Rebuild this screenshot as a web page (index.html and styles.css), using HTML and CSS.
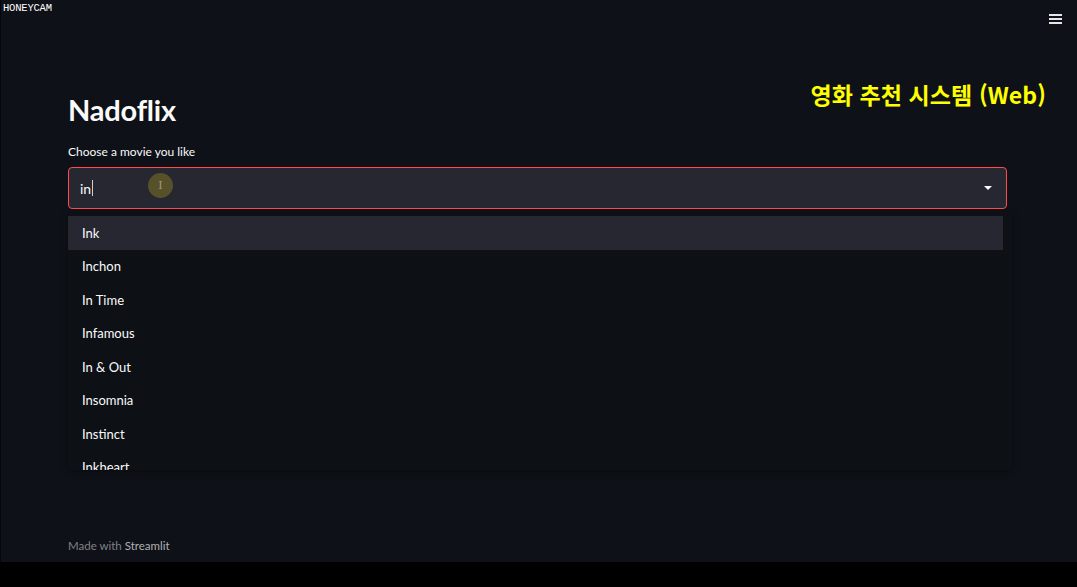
FILE: index.html
```html
<!DOCTYPE html>
<html lang="ko">
<head>
<meta charset="utf-8">
<title>Nadoflix</title>
<link rel="stylesheet" href="styles.css">
</head>
<body>
<div class="app">
  <header class="topbar">
    <span class="watermark">HONEYCAM</span>
    <span class="hamburger" aria-label="menu"><i></i><i></i><i></i></span>
  </header>
  <main class="main">
    <div class="title-row">
      <h1 class="title">Nadoflix</h1>
      <div class="caption">영화 추천 시스템 (Web)</div>
    </div>
    <label class="label">Choose a movie you like</label>
    <div class="select">
      <div class="select-box">
        <span class="typed">in</span><span class="caret"></span>
        <span class="cursor-dot"><span class="ibeam">I</span></span>
        <svg class="arrow" width="10" height="6" viewBox="0 0 10 6"><path d="M1 1h8L5 5z" fill="#fafafa"/></svg>
      </div>
      <ul class="menu">
        <li class="item active">Ink</li>
        <li class="item">Inchon</li>
        <li class="item">In Time</li>
        <li class="item">Infamous</li>
        <li class="item">In &amp; Out</li>
        <li class="item">Insomnia</li>
        <li class="item">Instinct</li>
        <li class="item">Inkheart</li>
      </ul>
    </div>
  </main>
  <footer class="footer">Made with <b>Streamlit</b></footer>
</div>
</body>
</html>
```
FILE: styles.css
```css
* { box-sizing: border-box; }
html, body { margin: 0; padding: 0; }
body {
  background: #000;
  width: 1077px;
  height: 587px;
  overflow: hidden;
  font-family: Lato, "Noto Sans", sans-serif;
  color: #fafafa;
}
.app {
  height: 562px;
  background: #0e1117;
  display: flex;
  flex-direction: column;
  border-left: 1px solid #05070a;
}
.topbar {
  height: 40px;
  display: flex;
  justify-content: space-between;
  align-items: flex-start;
  padding: 3px 15px 0 2px;
}
.watermark {
  font-family: "Liberation Mono", monospace;
  font-size: 10.5px;
  line-height: 11px;
  font-weight: 400;
  color: #fff;
  letter-spacing: -0.2px;
}
.hamburger {
  margin-top: 11px;
  width: 13px;
  display: flex;
  flex-direction: column;
  gap: 2.5px;
}
.hamburger i {
  display: block;
  height: 1.5px;
  background: #e6e6e6;
}
.main {
  flex: 1;
  padding: 0 70px 0 67px;
  display: flex;
  flex-direction: column;
}
.title-row {
  display: flex;
  justify-content: space-between;
  align-items: flex-start;
  margin-top: 52px;
}
.title {
  margin: 0;
  font-size: 29px;
  line-height: 36px;
  font-weight: 700;
  letter-spacing: -0.2px;
}
.caption {
  margin-top: -15px;
  margin-right: -39px;
  font-family: "Noto Sans CJK KR", sans-serif;
  font-weight: 700;
  font-size: 23px;
  letter-spacing: 0.1px;
  color: #ffff00;
}
.label {
  margin-top: 16px;
  font-size: 12px;
  line-height: 16px;
}
.select {
  position: relative;
  margin-top: 7px;
}
.select-box {
  position: relative;
  height: 42px;
  background: #262730;
  border: 1px solid #ff4b4b;
  border-radius: 4px;
  display: flex;
  align-items: center;
  padding-left: 11px;
  font-size: 14px;
}
.typed { color: #fafafa; }
.caret {
  width: 1px;
  height: 16px;
  background: #cfcfcf;
  margin-left: 1px;
}
.cursor-dot {
  position: absolute;
  left: 79px;
  top: 5px;
  width: 25px;
  height: 25px;
  border-radius: 50%;
  background: #57512a;
  display: flex;
  align-items: center;
  justify-content: center;
  font-size: 11px;
  color: #9a9a80;
  font-family: "DejaVu Serif", serif;
}
.arrow {
  position: absolute;
  right: 13px;
  top: 17px;
}
.menu {
  position: absolute;
  left: 0;
  top: 45px;
  width: 944px;
  height: 258px;
  margin: 0;
  padding: 4px 9px 0 0;
  list-style: none;
  background: #0d1015;
  overflow: hidden;
  box-shadow: 0 2px 6px rgba(0,0,0,0.35);
  border-radius: 2px;
}
.item {
  height: 33.5px;
  display: flex;
  align-items: center;
  padding-left: 14px;
  font-size: 13px;
  color: #fafafa;
}
.item.active { background: #262730; }
.footer {
  padding: 0 0 10px 67px;
  font-size: 11.5px;
  color: #808185;
}
.footer b { font-weight: 400; color: #b0b1b5; }
```
